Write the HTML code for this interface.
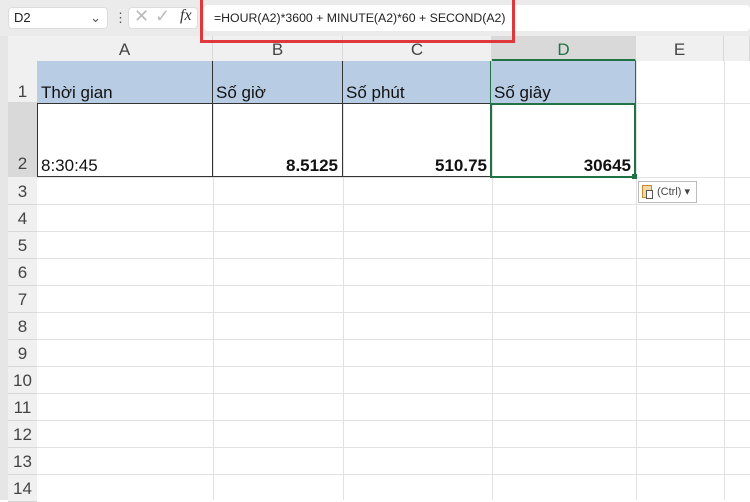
<!DOCTYPE html><html><head><meta charset="utf-8"><style>
body{margin:0;width:750px;height:500px;overflow:hidden;background:#fff;font-family:"Liberation Sans",sans-serif;position:relative}
div{position:absolute;box-sizing:border-box}
.t{font-size:17px;color:#111;white-space:nowrap}
.ch{top:36px;height:25px;font-size:17px;color:#444;text-align:center;line-height:27px;background:#f0f0f0;border-right:1px solid #d8d8d8}
.rh{left:8px;width:29px;font-size:17px;color:#444;text-align:center;background:#f0f0f0;border-bottom:1px solid #d8d8d8}
.hl{left:37px;right:0;height:1px;background:#e2e2e2}
.vl{top:61px;bottom:0;width:1px;background:#e2e2e2}
</style></head><body>
<div style="left:0;top:0;width:750px;height:36px;background:#ebebeb"></div>
<div style="left:8px;top:7px;width:100px;height:22px;background:#fff;border-radius:4px;border:1px solid #ddd;font-size:13px;line-height:20px;padding-left:5px;color:#222">D2<span style="position:absolute;right:6px;top:0;color:#555">⌄</span></div>
<div style="left:114px;top:10px;font-size:13px;color:#555">⋮</div>
<div style="left:128px;top:7px;width:70px;height:22px;background:#fff;border-radius:4px;border:1px solid #ddd"></div>
<div style="left:134px;top:6px;font-size:18px;color:#bbb">✕</div>
<div style="left:155px;top:6px;font-size:18px;color:#bbb">✓</div>
<div style="left:180px;top:7px;font-size:16px;font-style:italic;font-family:'Liberation Serif',serif;color:#333">fx</div>
<div style="left:204px;top:5px;width:546px;height:26px;background:#fff;border-radius:4px"></div>
<div style="left:214px;top:11px;font-size:12.3px;color:#222;white-space:nowrap">=HOUR(A2)*3600 + MINUTE(A2)*60 + SECOND(A2)</div>
<div style="left:0;top:36px;width:37px;height:464px;background:#f0f0f0"></div>
<div style="left:0;top:36px;width:8px;height:464px;background:#e6e6e6"></div>
<div class="ch" style="left:37px;width:176px">A</div>
<div class="ch" style="left:213px;width:130px">B</div>
<div class="ch" style="left:343px;width:149px">C</div>
<div class="ch" style="left:492px;width:144px;background:#d9d9d9;color:#217346;border-bottom:2px solid #217346">D</div>
<div class="ch" style="left:636px;width:88px">E</div>
<div class="ch" style="left:724px;width:26px"></div>
<div class="rh" style="top:61px;height:42px;line-height:62px">1</div>
<div class="rh" style="top:103px;height:74px;line-height:122px;background:#d9d9d9">2</div>
<div class="vl" style="left:213px"></div><div class="vl" style="left:343px"></div><div class="vl" style="left:492px"></div><div class="vl" style="left:636px"></div><div class="vl" style="left:724px"></div>
<div class="hl" style="top:103px"></div>
<div class="hl" style="top:177px"></div>
<div class="rh" style="top:178px;height:27px;line-height:27px">3</div>
<div class="hl" style="top:204px"></div><div class="rh" style="top:205px;height:27px;line-height:27px">4</div>
<div class="hl" style="top:231px"></div><div class="rh" style="top:232px;height:27px;line-height:27px">5</div>
<div class="hl" style="top:258px"></div><div class="rh" style="top:259px;height:27px;line-height:27px">6</div>
<div class="hl" style="top:285px"></div><div class="rh" style="top:286px;height:27px;line-height:27px">7</div>
<div class="hl" style="top:312px"></div><div class="rh" style="top:313px;height:27px;line-height:27px">8</div>
<div class="hl" style="top:339px"></div><div class="rh" style="top:340px;height:27px;line-height:27px">9</div>
<div class="hl" style="top:366px"></div><div class="rh" style="top:367px;height:27px;line-height:27px">10</div>
<div class="hl" style="top:393px"></div><div class="rh" style="top:394px;height:27px;line-height:27px">11</div>
<div class="hl" style="top:420px"></div><div class="rh" style="top:421px;height:27px;line-height:27px">12</div>
<div class="hl" style="top:447px"></div><div class="rh" style="top:448px;height:27px;line-height:27px">13</div>
<div class="hl" style="top:474px"></div><div class="rh" style="top:475px;height:27px;line-height:27px">14</div>
<div style="left:37px;top:61px;width:599px;height:43px;background:#b8cce4;border-bottom:1px solid #333"></div>
<div style="left:212px;top:61px;width:1px;height:116px;background:#333"></div>
<div style="left:342px;top:61px;width:1px;height:116px;background:#333"></div>
<div style="left:490px;top:61px;width:1px;height:116px;background:#333"></div>
<div style="left:37px;top:103px;width:1px;height:74px;background:#333"></div>
<div style="left:37px;top:176px;width:455px;height:1px;background:#333"></div>
<div style="left:490px;top:61px;width:146px;height:117px;border:1px solid #217346;border-top:none"></div>
<div style="left:490px;top:103px;width:146px;height:75px;border:2px solid #217346"></div>
<div style="left:632px;top:174px;width:5px;height:5px;background:#217346"></div>
<div class="t" style="left:41px;top:83px">Thời gian</div>
<div class="t" style="left:216px;top:83px">Số giờ</div>
<div class="t" style="left:346px;top:83px">Số phút</div>
<div class="t" style="left:494px;top:83px">Số giây</div>
<div class="t" style="left:41px;top:156px">8:30:45</div>
<div class="t" style="left:213px;width:125px;text-align:right;top:156px;font-weight:bold">8.5125</div>
<div class="t" style="left:343px;width:144px;text-align:right;top:156px;font-weight:bold">510.75</div>
<div class="t" style="left:492px;width:139px;text-align:right;top:156px;font-weight:bold">30645</div>
<div style="left:638px;top:181px;width:59px;height:22px;border:1px solid #bbb;background:#fff;font-size:11px;color:#444;line-height:20px;padding-left:18px">(Ctrl) ▾</div>
<div style="left:642px;top:185px;width:10px;height:13px;border:1px solid #c98a2a;background:#f3d9a8"></div>
<div style="left:646px;top:190px;width:7px;height:9px;border:1px solid #555;background:#fff"></div>
<div style="left:200px;top:-3px;width:315px;height:46px;border:3px solid #e0383a"></div>
</body></html>
